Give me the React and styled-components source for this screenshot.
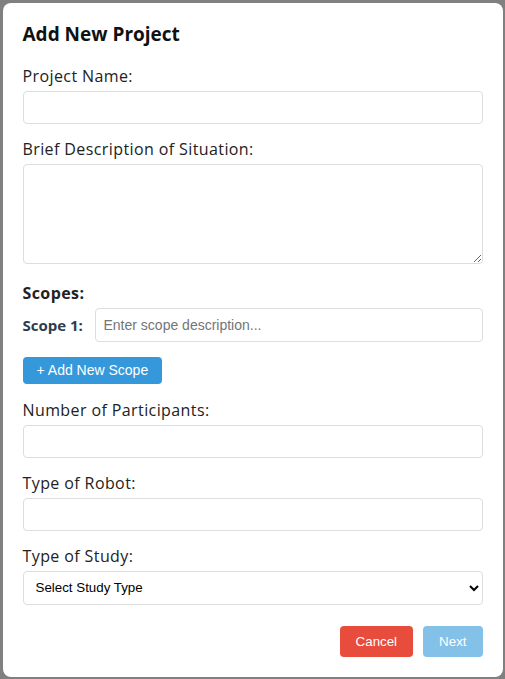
import React from "react";
import styled, { createGlobalStyle } from "styled-components";

const Global = createGlobalStyle`
  html, body { margin: 0; padding: 0; }
  body { font-family: "Open Sans", "Liberation Sans", sans-serif; }
  * { box-sizing: border-box; }
`;

const Overlay = styled.div`
  min-height: 100vh;
  background: #808080;
  display: flex;
  align-items: center;
  justify-content: center;
`;

const Modal = styled.div`
  width: 500px;
  background: #fff;
  border-radius: 8px;
  padding: 20px;
  display: flex;
  flex-direction: column;
`;

const Title = styled.h2`
  margin: 0 0 20px;
  font-size: 19px;
  line-height: 23px;
  font-weight: 700;
  color: #111;
`;

const Form = styled.div`
  display: flex;
  flex-direction: column;
  gap: 15px;
`;

const Group = styled.div`
  display: flex;
  flex-direction: column;
  margin-bottom: ${(p) => p.$extra || 0}px;
`;

const Label = styled.label`
  display: block;
  font-size: 16px;
  line-height: 20px;
  margin-bottom: 5px;
  color: #222;
  font-weight: ${(p) => (p.$bold ? 700 : 400)};
  letter-spacing: 0.4px;
`;

const Input = styled.input`
  width: 100%;
  height: ${(p) => p.$h || 33}px;
  border: 1px solid #ddd;
  border-radius: 4px;
  padding: 8px;
  font-family: "Liberation Sans", Arial, sans-serif;
  font-size: ${(p) => p.$fs || 13.33}px;
  background: #fff;
  &::placeholder { color: #757575; }
`;

const TextArea = styled.textarea`
  display: block;
  width: 100%;
  height: 100px;
  border: 1px solid #ddd;
  border-radius: 4px;
  padding: 8px;
  resize: vertical;
  font-family: "Liberation Sans", Arial, sans-serif;
  font-size: 13.33px;
`;

const ScopeRow = styled.div`
  display: flex;
  align-items: center;
  gap: 10px;
`;

const ScopeLabel = styled.span`
  flex: 0 0 62px;
  font-size: 15px;
  font-weight: 700;
  color: #2c3e50;
`;

const AddButton = styled.button`
  align-self: flex-start;
  height: 27px;
  padding: 0 14px;
  margin-bottom: 1px;
  border: none;
  border-radius: 4px;
  background: #3498db;
  color: #fff;
  font-family: "Liberation Sans", Arial, sans-serif;
  font-size: 14px;
  cursor: pointer;
`;

const Select = styled.select`
  width: 100%;
  height: 34px;
  border: 1px solid #ddd;
  border-radius: 4px;
  padding: 0 8px;
  background: #fff;
  color: #000;
  font-family: "Liberation Sans", Arial, sans-serif;
  font-size: 13.33px;
`;

const Actions = styled.div`
  display: flex;
  justify-content: flex-end;
  gap: 10px;
  margin-top: 21px;
`;

const ActionButton = styled.button`
  height: 31px;
  padding: 0 16px;
  border: none;
  border-radius: 4px;
  color: #fff;
  font-family: "Liberation Sans", Arial, sans-serif;
  font-size: 13.33px;
  background: ${(p) => (p.$variant === "danger" ? "#e74c3c" : "#3498db")};
  opacity: ${(p) => (p.disabled ? 0.6 : 1)};
  cursor: ${(p) => (p.disabled ? "default" : "pointer")};
`;

export default function App() {
  return (
    <>
      <Global />
      <Overlay>
        <Modal>
          <Title>Add New Project</Title>
          <Form>
            <Group>
              <Label>Project Name:</Label>
              <Input type="text" />
            </Group>
            <Group $extra={4}>
              <Label>Brief Description of Situation:</Label>
              <TextArea />
            </Group>
            <Group>
              <Label $bold>Scopes:</Label>
              <ScopeRow>
                <ScopeLabel>Scope 1:</ScopeLabel>
                <Input type="text" $h={34} $fs={14} placeholder="Enter scope description..." />
              </ScopeRow>
            </Group>
            <AddButton type="button">+ Add New Scope</AddButton>
            <Group>
              <Label>Number of Participants:</Label>
              <Input type="text" />
            </Group>
            <Group>
              <Label>Type of Robot:</Label>
              <Input type="text" />
            </Group>
            <Group>
              <Label>Type of Study:</Label>
              <Select defaultValue="">
                <option value="">Select Study Type</option>
                <option value="lab">Lab Study</option>
                <option value="field">Field Study</option>
              </Select>
            </Group>
          </Form>
          <Actions>
            <ActionButton $variant="danger" type="button">Cancel</ActionButton>
            <ActionButton type="button" disabled>Next</ActionButton>
          </Actions>
        </Modal>
      </Overlay>
    </>
  );
}
